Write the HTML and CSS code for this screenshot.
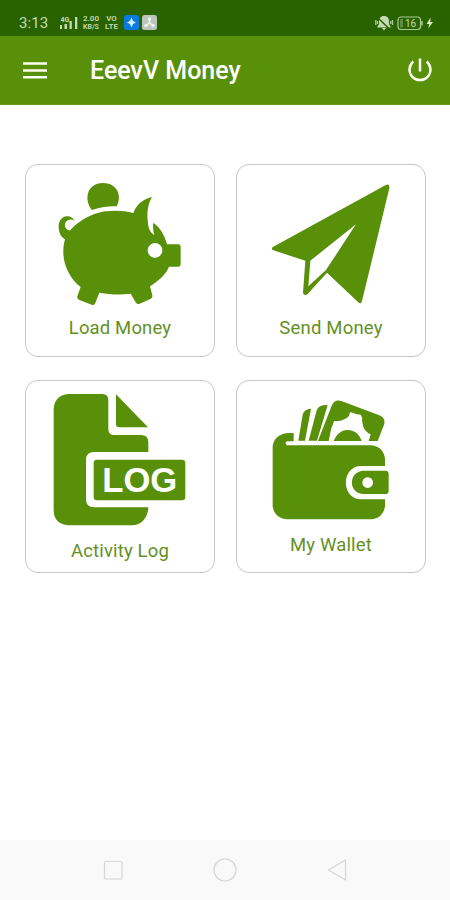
FILE: index.html
```
<!DOCTYPE html>
<html lang="en">

<head>
    <meta charset="UTF-8">
    <meta name="viewport" content="width=device-width, initial-scale=1.0">
    <title>EeevV Money</title>
    <link rel="stylesheet" href="styles.css">
</head>

<body>
    <div class="status">
        <span class="time">3:13</span>
        <svg class="signal" width="20" height="16" viewBox="0 0 20 16">
            <path d="M1 10h2v4H1zM5.500 9H8v5H5.500zM10.500 6h2.300v8h-2.300zM16 2h2.300v12H16z" />
            <text x="1.500" y="7">4G</text>
        </svg>
        <span class="stack speed"><b>2.00</b><b>KB/S</b></span>
        <span class="stack volte"><b>VO</b><b>LTE</b></span>
        <svg class="app" width="15" height="15" viewBox="0 0 15 15">
            <rect width="15" height="15" rx="2.500" fill="#0b7be0" />
            <path d="M7.500 2.500l1.500 3.500 3 1.500-3 1.500-1.500 3.500L6 9 3 7.500 6 6z" fill="#d5f0ff" />
        </svg>
        <svg class="app" width="15" height="15" viewBox="0 0 15 15">
            <rect width="15" height="15" rx="2.500" fill="#bcc5bc" />
            <path d="M7.500 3.500v4L4 11M7.500 7.500L11 11" fill="none" stroke="#eef2ee" stroke-width="1.600" />
            <circle cx="7.500" cy="4" r="1.700" fill="#eef2ee" />
            <circle cx="4" cy="10.500" r="1.700" fill="#eef2ee" />
            <circle cx="11" cy="10.500" r="1.700" fill="#eef2ee" />
        </svg>
        <svg class="right" width="60" height="16" viewBox="0 0 60 16">
            <path d="M9 1c3.500 0 5 2.500 5 5v3l2 3.500H2L4 9V6c0-2.500 1.500-5 5-5zM7 13h4l-2 2.500z" fill="#c3dbb4" />
            <path d="M.800 5v5M2.500 6v3M17.500 5v5M15.700 6v3" stroke="#a9ca96" stroke-width="1.300" />
            <path d="M2.500 2.500l12.500 12" stroke="#286300" stroke-width="1.500" />
            <rect x="23" y="2" width="22.500" height="12.500" rx="3" fill="none" stroke="#a9ca96" stroke-width="1.200" />
            <path d="M47 6v4.500" stroke="#a9ca96" stroke-width="1.500" />
            <path d="M25 4h3v8.500h-3z" fill="#5e8b3d" />
            <text x="30" y="11.800">16</text>
            <path d="M55.500 2.500l-4 6.500h2.700l-1 4.500 4.800-6.500h-2.700z" fill="#d5e8c8" />
        </svg>
    </div>

    <div class="toolbar">
        <svg class="menu" width="24" height="17" viewBox="0 0 24 17">
            <path d="M0 1.400h24M0 8.400h24M0 15.300h24" />
        </svg>
        <h1>EeevV Money</h1>
        <svg class="power" width="26" height="26" viewBox="0 0 26 26">
            <path d="M13 1.500v13M6.300 4.500a10.500 10.500 0 1 0 13.400 0" />
        </svg>
    </div>

    <div class="cards">
        <div class="card">
            <svg viewBox="18 15 564 450" width="188" height="150">
                <!-- coin -->
                <path d="M216 150C192 122 198 70 249 69c49 1 56 46 41 70-26-1-53 3-74 11z" />
                <!-- tail -->
                <path d="M163 182c-4-10-14-15-25-13-14 3-23 16-22 34 1 17 8 30 22 36l24-27c-12 3-24-2-27-13-3-16 15-27 28-17z" />
                <!-- body -->
                <path fill-rule="evenodd" d="M340 159c8-23 28-42 56-48-14 24-16 51-12 79 2 18 7 28 19 35-4-12-5-23-3-37 20 14 34 37 41 65h34q7 0 7 7v53q0 7-7 7h-28c-10 24-31 42-57 59l7 27q2 8-6 11l-32 14q-8 4-12-4l-15-26c-30 4-60 3-94-3l-12 31q-3 8-11 5l-37-14q-8-3-6-11l10-28c-29-21-52-63-52-103 0-29 5-39 10-52 20-35 70-65 116-72 30-4 57-2 84 5zM405 249a22 22 0 1 0 .1 0z" />
            </svg>
            <p>Load Money</p>
        </div>
        <div class="card">
            <svg viewBox="21 15 564 450" width="188" height="150">
                <path fill-rule="evenodd" d="M466 76q14-7 12 9l-82 338q-3 12-12 3l-93-88-59 65q-9 6-13-4l7-97-96-31q-9-6 0-11zM378 193L241 302l-6 77 53-49z" />
            </svg>
            <p class="send">Send Money</p>
        </div>
        <div class="card log">
            <svg viewBox="18 18 564 450" width="188" height="150">
                <path d="M145 57h102q18 0 18 18v87q0 18 18 18h80q22 0 22 22v29H222q-24 0-24 24v118q0 24 24 24h163c-1 30-20 54-49 54H145q-44-4-44-46V103q2-42 44-46z" />
                <path d="M288 58l96 99h-86q-10 0-10-10z" />
                <rect x="221" y="254" width="275" height="122" rx="10" />
                <text x="247" y="352" textLength="225">LOG</text>
            </svg>
            <p>Activity Log</p>
        </div>
        <div class="card wallet">
            <svg viewBox="21 18 564 450" width="188" height="150">
                <!-- notes -->
                <path d="M205 197l13-78q4-17 25-18l-18 96zM236 197l24-91q6-17 33-16l-32 107z" />
                <path fill-rule="evenodd" d="M264 198l41-106q9-21 29-14l114 43q19 8 15 26l-20 51h-27l6-20c-16-8-22-18-24-32q-3-9-1-16l-5-11-15-2-8-4-9-1-3 10q-5 7-13 10-10 8-32 6-4 14-8 21l-8 39z" />
                <path d="M311 198c9-21 22-32 42-33 22 1 35 13 42 33z" />
                <!-- wallet -->
                <path d="M172 174h19v25h-20q-9 6 0 12h255c23 4 36 17 39 40v22h-75c-55 3-58 96 0 100h75v21c-4 24-18 36-39 39H169c-23-3-38-17-41-39V214c3-24 20-37 44-40z" />
                <path fill-rule="evenodd" d="M398 287h68q10 0 10 10v50q0 10-10 10h-68c-43-5-43-65 0-70zM413 307a16 16 0 1 0 .1 0z" />
            </svg>
            <p>My Wallet</p>
        </div>
    </div>

    <div class="navbar">
        <svg width="24" height="24" viewBox="0 0 24 24"><rect x="3.500" y="3.500" width="17.500" height="17.500" rx="1" /></svg>
        <svg width="24" height="24" viewBox="0 0 24 24"><circle cx="12" cy="12" r="11" /></svg>
        <svg width="24" height="24" viewBox="0 0 24 24"><path d="M3.500 12L20.500 2v20z" /></svg>
    </div>
</body>

</html>
```
FILE: styles.css
```
* {
    margin: 0;
    padding: 0;
    box-sizing: border-box;
}

body {
    height: 900px;
    display: flex;
    flex-direction: column;
    overflow: hidden;
    background-color: #fff;
    font-family: Roboto, "Liberation Sans", sans-serif;
}

svg {
    display: block;
    flex: none;
}

.status {
    height: 36px;
    padding: 9px 15px 0 19px;
    display: flex;
    align-items: center;
    background-color: #286300;
    color: #c3dbb4;
}

.time {
    width: 40px;
    font-size: 15px;
    letter-spacing: 0.1px;
}

.signal {
    fill: #c3dbb4;
}

.signal text {
    font-size: 7px;
    font-weight: bold;
}

.stack {
    display: flex;
    flex-direction: column;
    font-size: 8px;
    line-height: 8px;
}

.stack b {
    font-weight: 600;
}

.speed {
    width: 18px;
    margin-left: 4px;
}

.speed b + b {
    font-size: 7px;
}

.volte {
    width: 15px;
    margin: 0 5px 0 3px;
    align-items: center;
}

.app {
    margin-right: 3px;
}

.right {
    margin-left: auto;
}

.right text {
    font-size: 10px;
    fill: #c3dbb4;
}

.toolbar {
    height: 69px;
    padding: 0 17px 0 23px;
    display: flex;
    align-items: center;
    background-color: #589009;
    border-bottom: 1px solid #659b25;
    color: #fff;
}

.menu,
.power {
    fill: none;
    stroke: #fbfff0;
    stroke-width: 2.5;
}

.toolbar h1 {
    flex: 1;
    margin-left: 43px;
    font-size: 25px;
    font-weight: 500;
    line-height: 32px;
    padding-top: 1px;
}

.cards {
    flex: 1;
    padding: 59px 24px 0 25px;
    display: grid;
    grid-template-columns: 190px 190px;
    grid-auto-rows: 193px;
    gap: 23px 21px;
    align-content: start;
}

.card {
    border: 1px solid #c6c6c6;
    border-radius: 13px;
    fill: #589009;
}

.card p {
    margin-top: 1px;
    font-size: 18.5px;
    line-height: 24px;
    letter-spacing: 0.15px;
    text-align: center;
    color: #64901f;
}

.card .send {
    letter-spacing: 0.2px;
}

.log p {
    margin-top: 8px;
}

.wallet p {
    margin-top: 2px;
}

.log text {
    font: bold 104px "Liberation Sans", sans-serif;
    fill: #fff;
}

.navbar {
    height: 60px;
    padding: 0 101px 0 101px;
    display: flex;
    align-items: center;
    justify-content: space-between;
    background-color: #f9f9f9;
    fill: none;
    stroke: #d6d6d6;
    stroke-width: 1.2;
}
```
